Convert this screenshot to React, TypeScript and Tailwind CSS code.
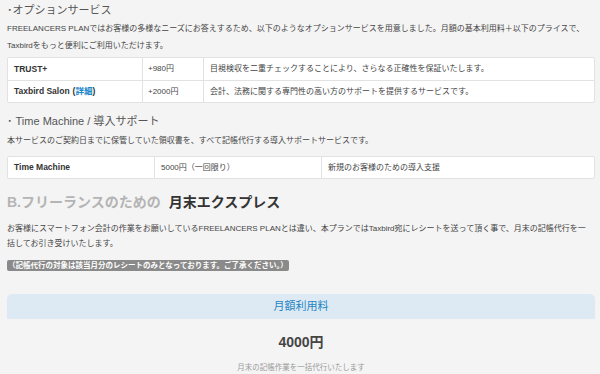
const font = { fontFamily: '"Liberation Sans", "Noto Sans CJK JP", sans-serif' };

const options = [
  { name: "TRUST+", price: "+980円", note: "目視検収を二重チェックすることにより、さらなる正確性を保証いたします。" },
  { name: "Taxbird Salon", link: "詳細", price: "+2000円", note: "会計、法務に関する専門性の高い方のサポートを提供するサービスです。" },
];

export default function App() {
  return (
    <div style={font} className="min-h-[374px] w-[600px] overflow-hidden bg-[#f4f4f4] pl-[7px] pr-[5px] text-[#444]">
      <h2 className="h-[20px] text-[11px] leading-[20px] text-[#555]">･オプションサービス</h2>
      <p className="whitespace-nowrap text-[8px] leading-[17px]">
        FREELANCERS PLANではお客様の多様なニーズにお答えするため、以下のようなオプションサービスを用意しました。月額の基本利用料＋以下のプライスで、
        <br />
        Taxbirdをもっと便利にご利用いただけます。
      </p>

      <div className="mt-[3px] overflow-hidden rounded-[2px] border border-[#e2e2e2] bg-white">
        {options.map((o, i) => (
          <div key={o.name} className={`flex h-[22px] items-center text-[8px] ${i > 0 ? "border-t border-[#e2e2e2]" : ""}`}>
            <div className="flex h-full w-[134px] items-center pl-[6px] text-[8.5px] font-bold text-[#333]">
              {o.name}
              {o.link && (
                <span className="ml-[3px]">
                  (<span className="text-[#1a88c9]">{o.link}</span>)
                </span>
              )}
            </div>
            <div className="flex h-full w-[61px] items-center border-l border-[#e2e2e2] pl-[5px]">{o.price}</div>
            <div className="flex h-full flex-1 items-center border-l border-[#e2e2e2] pl-[6px]">{o.note}</div>
          </div>
        ))}
      </div>

      <h2 className="mt-[8px] h-[20px] text-[11px] leading-[20px] text-[#555]">･ Time Machine / 導入サポート</h2>
      <p className="mt-[1px] text-[8px] leading-[17px]">
        本サービスのご契約日までに保管していた領収書を、すべて記帳代行する導入サポートサービスです。
      </p>
      <div className="mt-[7px] flex h-[23px] items-center overflow-hidden rounded-[2px] border border-[#e2e2e2] bg-white text-[8px]">
        <div className="flex h-full w-[146px] items-center pl-[6px] text-[8.5px] font-bold text-[#333]">Time Machine</div>
        <div className="flex h-full w-[167px] items-center border-l border-[#e2e2e2] pl-[6px]">5000円（一回限り）</div>
        <div className="flex h-full flex-1 items-center border-l border-[#e2e2e2] pl-[6px]">新規のお客様のための導入支援</div>
      </div>

      <h1 className="mt-[11px] flex h-[24px] items-center text-[14px] font-bold leading-[24px]">
        <span className="text-[#b4b4b4]">B.フリーランスのための</span>
        <span className="ml-[8px] text-[#333]">月末エクスプレス</span>
      </h1>
      <p className="mt-[7px] whitespace-nowrap text-[8px] leading-[15px]">
        お客様にスマートフォン会計の作業をお願いしているFREELANCERS PLANとは違い、本プランではTaxbird宛にレシートを送って頂く事で、月末の記帳代行を一
        <br />
        括してお引き受けいたします。
      </p>
      <div className="mt-[4px] inline-block h-[11px] rounded-[2px] bg-[#8a8a8a] px-[1px] text-[7.5px] font-bold leading-[11px] text-white">
        （記帳代行の対象は該当月分のレシートのみとなっております。ご了承ください。）
      </div>

      <div className="mt-[19px]">
        <div className="flex h-[25px] items-center justify-center rounded-t-[5px] bg-[#deeaf3] text-[11px] text-[#2385c4]">
          月額利用料
        </div>
        <div className="mt-[13px] h-[20px] text-center text-[14px] font-bold leading-[20px] text-[#444]">4000円</div>
        <div className="mt-[10px] h-[12px] text-center text-[7.5px] leading-[12px] text-[#9a9a9a]">
          月末の記帳作業を一括代行いたします
        </div>
      </div>
    </div>
  );
}
